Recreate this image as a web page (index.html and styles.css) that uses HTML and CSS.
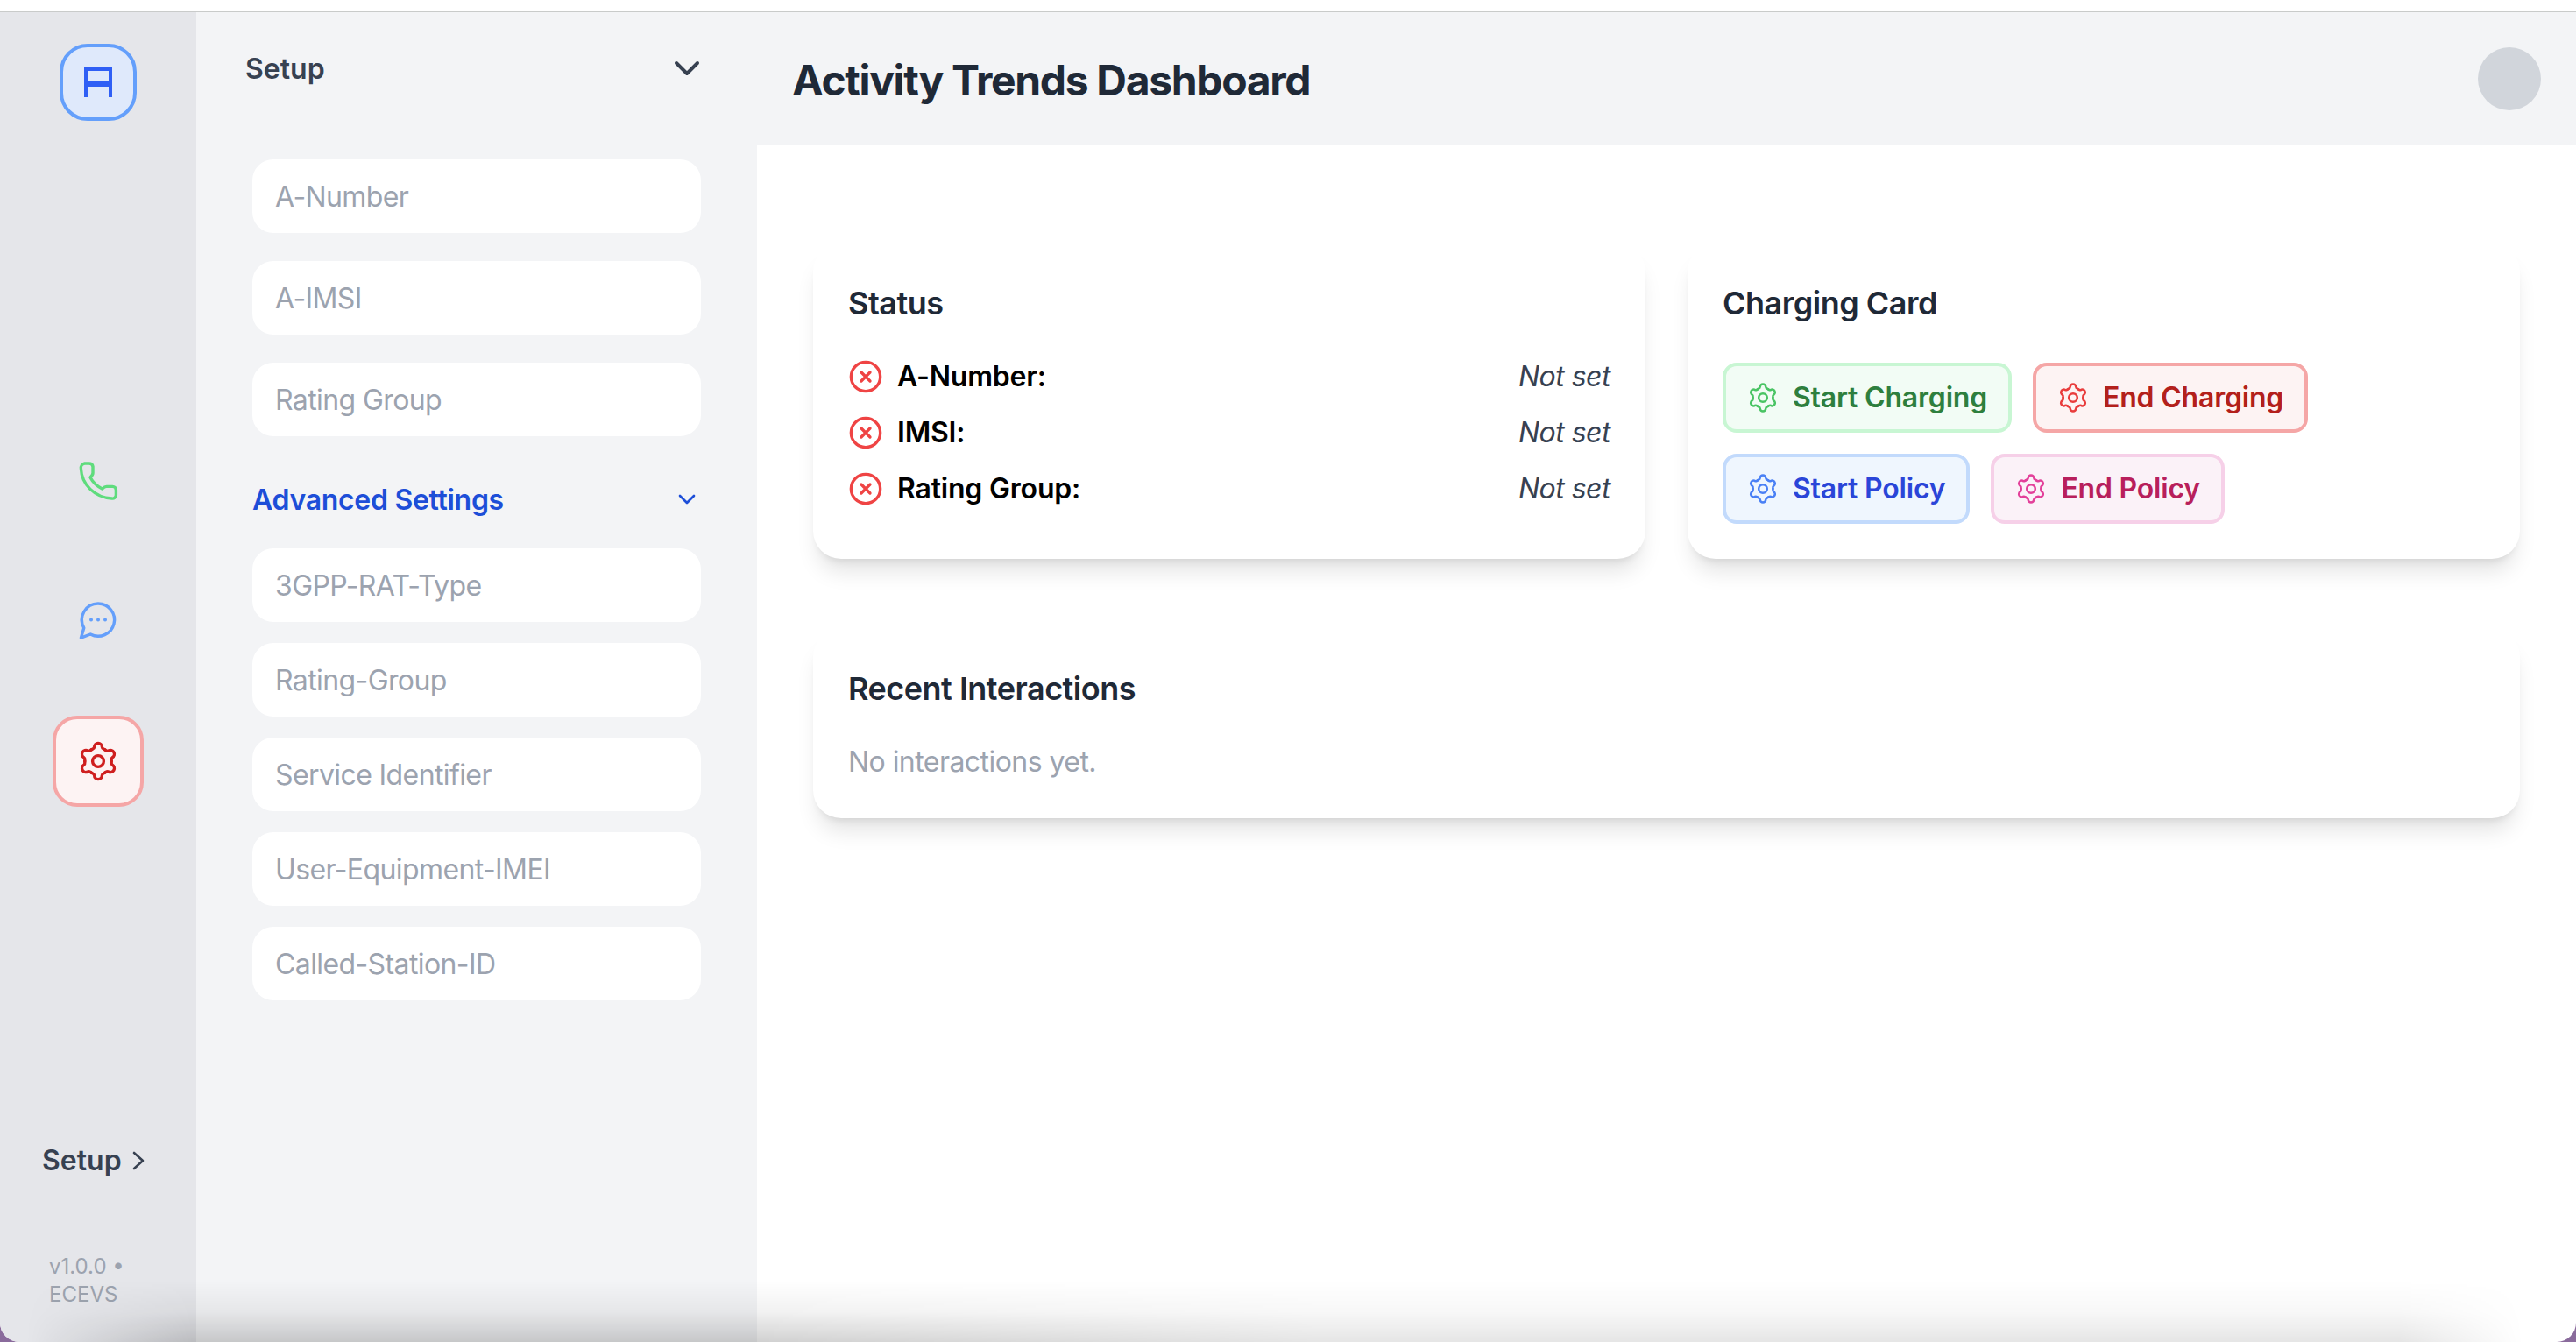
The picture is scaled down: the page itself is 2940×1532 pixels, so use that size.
FILE: index.html
```html
<!DOCTYPE html>
<html lang="en">

<head>
    <meta charset="UTF-8">
    <meta name="viewport" content="width=device-width, initial-scale=1.0">
    <title>Activity Trends Dashboard</title>
    <link rel="stylesheet" href="styles.css">
</head>

<body>
    <svg class="defs" width="0" height="0">
        <defs>
            <symbol id="gear" viewBox="0 0 24 24">
                <path id="lobe" d="M8.2 5.4C9.1 4.9 9.8 4.8 9.8 3.9a2.2 2.2 0 0 1 4.4 0C14.2 4.8 14.9 4.9 15.8 5.4" />
                <use href="#lobe" transform="rotate(60 12 12)" />
                <use href="#lobe" transform="rotate(120 12 12)" />
                <use href="#lobe" transform="rotate(180 12 12)" />
                <use href="#lobe" transform="rotate(240 12 12)" />
                <use href="#lobe" transform="rotate(300 12 12)" />
                <circle cx="12" cy="12" r="3.2" />
            </symbol>
            <symbol id="x-circle" viewBox="0 0 24 24">
                <circle cx="12" cy="12" r="10" />
                <path d="M15 9l-6 6M9 9l6 6" />
            </symbol>
        </defs>
    </svg>

    <div class="top-strip"></div>

    <div class="window">
        <nav class="rail">
            <div class="logo">
                <svg class="logo-icon" viewBox="0 0 32 34">
                    <path d="M2 34V2h28v32" />
                    <path class="logo-bar" d="M2 19h28" />
                </svg>
            </div>

            <div class="rail-nav">
                <div class="rail-btn phone">
                    <svg class="icon-48" viewBox="0 0 24 24">
                        <path d="M4.3 2h2.5A2.2 2.2 0 0 1 9 3.8v3.7C9 8.5 7.5 10 7.5 10c1.5 2.8 3.8 5 6.8 6.5 0 0 1.5-1.3 2.5-1.3h3.4a2 2 0 0 1 2 2V20a2 2 0 0 1-2.4 2C10 21.5 2.6 14 2.2 5a2.6 2.6 0 0 1 2.1-3Z" />
                    </svg>
                </div>
                <div class="rail-btn chat">
                    <svg class="icon-48" viewBox="0 0 24 24">
                        <path d="M12 2a9.3 9.3 0 1 1-4.4 17.5L2.2 21.6l1.7-5.7A9.3 9.3 0 0 1 12 2Z" />
                        <path class="dots" d="M8 11.3h.01M12 11.3h.01M16 11.3h.01" />
                    </svg>
                </div>
                <div class="rail-btn settings">
                    <svg class="icon-48"><use href="#gear" /></svg>
                </div>
            </div>

            <div class="rail-setup">
                <span>Setup</span>
                <svg class="rail-chevron" viewBox="0 0 14 22">
                    <path d="M2 2l10 9-10 9" />
                </svg>
            </div>
            <div class="version">v1.0.0 •<br>ECEVS</div>
        </nav>

        <aside class="panel">
            <div class="panel-head">
                <span>Setup</span>
                <svg class="chevron" viewBox="0 0 24 24"><path d="M6 9l6 6 6-6" /></svg>
            </div>

            <div class="field-group">
                <input class="field" placeholder="A-Number">
                <input class="field" placeholder="A-IMSI">
                <input class="field" placeholder="Rating Group">
            </div>

            <div class="advanced-head">
                <span>Advanced Settings</span>
                <svg class="chevron-small" viewBox="0 0 24 24"><path d="M6 9l6 6 6-6" /></svg>
            </div>

            <div class="field-group tight">
                <input class="field" placeholder="3GPP-RAT-Type">
                <input class="field" placeholder="Rating-Group">
                <input class="field" placeholder="Service Identifier">
                <input class="field" placeholder="User-Equipment-IMEI">
                <input class="field" placeholder="Called-Station-ID">
            </div>
        </aside>

        <div class="content">
            <header class="topbar">
                <h1>Activity Trends Dashboard</h1>
                <div class="avatar"></div>
            </header>

            <main class="main">
                <div class="card-row">
                    <section class="card">
                        <h2>Status</h2>
                        <div class="status-row">
                            <svg class="x-icon"><use href="#x-circle" /></svg>
                            <span class="status-label">A-Number:</span>
                            <span class="status-value">Not set</span>
                        </div>
                        <div class="status-row">
                            <svg class="x-icon"><use href="#x-circle" /></svg>
                            <span class="status-label">IMSI:</span>
                            <span class="status-value">Not set</span>
                        </div>
                        <div class="status-row">
                            <svg class="x-icon"><use href="#x-circle" /></svg>
                            <span class="status-label">Rating Group:</span>
                            <span class="status-value">Not set</span>
                        </div>
                    </section>

                    <section class="card">
                        <h2>Charging Card</h2>
                        <div class="actions">
                            <button class="action green"><svg class="gear-icon"><use href="#gear" /></svg>Start Charging</button>
                            <button class="action red"><svg class="gear-icon"><use href="#gear" /></svg>End Charging</button>
                            <button class="action blue"><svg class="gear-icon"><use href="#gear" /></svg>Start Policy</button>
                            <button class="action pink"><svg class="gear-icon"><use href="#gear" /></svg>End Policy</button>
                        </div>
                    </section>
                </div>

                <section class="card">
                    <h2>Recent Interactions</h2>
                    <p class="empty">No interactions yet.</p>
                </section>
            </main>
        </div>

        <div class="bottom-fade"></div>
    </div>
</body>

</html>
```

FILE: styles.css
```css
* {
    box-sizing: border-box;
}

html,
body {
    height: 100%;
}

body {
    margin: 0;
    display: flex;
    flex-direction: column;
    background-color: #8a6b9c;
    font-family: Inter, "Noto Sans", sans-serif;
    font-size: 32px;
    line-height: 48px;
    color: #111827;
}

.defs {
    position: absolute;
}

symbol path,
symbol circle,
.rail svg path {
    fill: none;
    stroke: currentColor;
    stroke-width: 1.7;
    stroke-linecap: round;
    stroke-linejoin: round;
}

#x-circle path,
#x-circle circle {
    stroke-width: 2;
}

.top-strip {
    height: 14px;
    flex: none;
    background-color: #fff;
    border-bottom: 2px solid #c9cbca;
}

.window {
    position: relative;
    flex: 1;
    display: flex;
    min-height: 0;
    overflow: hidden;
    border-radius: 0 0 22px 22px;
    background-color: #fff;
}

/* icon rail */
.rail {
    width: 224px;
    flex: none;
    display: flex;
    flex-direction: column;
    align-items: center;
    background-color: #e5e6ea;
    padding-top: 36px;
}

.logo {
    width: 88px;
    height: 88px;
    display: flex;
    align-items: center;
    justify-content: center;
    background-color: #dfe9fb;
    border: 4px solid #649ffb;
    border-radius: 32px;
}

.rail .logo-icon {
    width: 32px;
    height: 34px;
}

.rail .logo-icon path {
    stroke: #2f5ff5;
    stroke-width: 4;
    stroke-linecap: butt;
    stroke-linejoin: miter;
}

.rail .logo-icon .logo-bar {
    stroke-width: 6;
}

.rail-nav {
    display: flex;
    flex-direction: column;
    align-items: center;
    gap: 56px;
    margin-top: 359px;
}

.rail-btn {
    width: 104px;
    height: 104px;
    display: flex;
    align-items: center;
    justify-content: center;
    border-radius: 28px;
    border: 4px solid transparent;
}

.icon-48 {
    width: 48px;
    height: 48px;
}

.phone {
    color: #5fdc7d;
}

.chat {
    color: #649ffb;
}

.chat .dots {
    stroke-width: 2;
}

.settings {
    color: #cf1f1f;
    background-color: #fdf3f3;
    border-color: #f5a6a6;
}

.rail-setup {
    display: flex;
    align-items: center;
    gap: 12px;
    margin-top: auto;
    font-weight: 600;
    color: #374151;
    align-self: flex-start;
    padding-left: 48px;
}

.rail-chevron {
    width: 14px;
    height: 22px;
}

.rail .rail-chevron path {
    stroke-width: 2.6;
}

.version {
    align-self: flex-start;
    margin-top: 81px;
    margin-bottom: 38px;
    padding-left: 56px;
    font-size: 24px;
    line-height: 32px;
    color: #9ca3af;
}

/* setup panel */
.panel {
    width: 640px;
    flex: none;
    background-color: #f3f4f6;
    padding: 40px 56px 0;
}

.panel-head {
    display: flex;
    align-items: center;
    justify-content: space-between;
    font-weight: 600;
    color: #374151;
}

.panel-head span {
    padding-top: 2px;
    line-height: 46px;
}

.chevron,
.chevron-small {
    fill: none;
    stroke: currentColor;
    stroke-linecap: round;
    stroke-linejoin: round;
}

.chevron {
    width: 48px;
    height: 48px;
    stroke-width: 2;
}

.field-group {
    display: flex;
    flex-direction: column;
    gap: 32px;
    margin: 80px 8px 0;
}

.field-group.tight {
    gap: 24px;
    margin-top: 32px;
}

.field {
    width: 100%;
    height: 84px;
    padding: 0 26px;
    background-color: #fff;
    border: none;
    border-radius: 24px;
    font: inherit;
    letter-spacing: -0.6px;
    color: #111827;
}

.field::placeholder {
    color: #9ca3af;
    opacity: 1;
}

.advanced-head {
    display: flex;
    align-items: center;
    justify-content: space-between;
    margin: 48px 8px 0;
    font-weight: 600;
    letter-spacing: -0.3px;
    color: #1d4ed8;
}

.advanced-head span {
    padding-top: 2px;
    line-height: 46px;
}

.chevron-small {
    width: 32px;
    height: 32px;
    stroke-width: 2;
}

/* main area */
.content {
    flex: 1;
    min-width: 0;
    display: flex;
    flex-direction: column;
}

.topbar {
    height: 152px;
    flex: none;
    display: flex;
    align-items: center;
    justify-content: space-between;
    padding: 0 40px;
    background-color: #f3f4f6;
}

h1 {
    margin: 0;
    padding-top: 4px;
    font-size: 48px;
    line-height: 64px;
    font-weight: 700;
    letter-spacing: -1.35px;
    color: #1f2937;
}

.avatar {
    width: 72px;
    height: 72px;
    border-radius: 50%;
    background-color: #d1d5db;
}

.main {
    flex: 1;
    display: flex;
    flex-direction: column;
    gap: 80px;
    padding: 112px 64px 0;
}

.card-row {
    display: grid;
    grid-template-columns: 1fr 1fr;
    gap: 48px;
}

.card {
    padding: 40px;
    background-color: #fff;
    border-radius: 32px;
    box-shadow: 0 20px 25px -5px rgba(0, 0, 0, 0.1), 0 8px 10px -6px rgba(0, 0, 0, 0.1);
}

h2 {
    margin: 0 0 32px;
    font-size: 36px;
    line-height: 56px;
    font-weight: 600;
    letter-spacing: -0.5px;
    color: #1f2937;
}

.status-row {
    display: flex;
    align-items: center;
    gap: 16px;
    height: 48px;
    margin-bottom: 16px;
}

.x-icon {
    width: 40px;
    height: 40px;
    color: #ef4444;
}

.status-label {
    font-weight: 600;
    letter-spacing: -0.2px;
    color: #000;
}

.status-value {
    margin-left: auto;
    font-style: italic;
    letter-spacing: -0.5px;
    color: #374151;
}

.actions {
    display: flex;
    flex-wrap: wrap;
    gap: 24px;
    margin-top: 40px;
}

.action {
    display: flex;
    align-items: center;
    gap: 16px;
    height: 80px;
    padding: 0 24px;
    border: 4px solid;
    border-radius: 16px;
    font: inherit;
    font-weight: 600;
    letter-spacing: -0.2px;
}

.gear-icon {
    width: 36px;
    height: 36px;
}

.green {
    background-color: #f2fcf5;
    border-color: #c8f6d3;
    color: #2e7f3e;
}

.green .gear-icon {
    color: #4ac464;
}

.red {
    background-color: #fdf3f3;
    border-color: #f5a6a6;
    color: #b3201b;
}

.red .gear-icon {
    color: #e93d3d;
}

.blue {
    background-color: #eff6fe;
    border-color: #c2dafc;
    color: #2a45d8;
}

.blue .gear-icon {
    color: #4a80f5;
}

.pink {
    background-color: #fbf2f8;
    border-color: #f6d0e8;
    color: #b81f5c;
}

.pink .gear-icon {
    color: #e3409a;
}

.empty {
    margin: 0;
    letter-spacing: -0.55px;
    color: #9ca3af;
}

/* shadow of the window edge along the bottom */
.bottom-fade {
    position: absolute;
    left: 0;
    right: 0;
    bottom: 0;
    height: 70px;
    pointer-events: none;
    background: linear-gradient(to top, rgba(0, 0, 0, 0.18), rgba(0, 0, 0, 0.05) 50%, rgba(0, 0, 0, 0));
    -webkit-mask-image: linear-gradient(to right, transparent 30px, #000 220px, #000 864px, rgba(0, 0, 0, 0.55) 1500px, rgba(0, 0, 0, 0.55) 2740px, transparent 2880px);
    mask-image: linear-gradient(to right, transparent 30px, #000 220px, #000 864px, rgba(0, 0, 0, 0.55) 1500px, rgba(0, 0, 0, 0.55) 2740px, transparent 2880px);
}
```
